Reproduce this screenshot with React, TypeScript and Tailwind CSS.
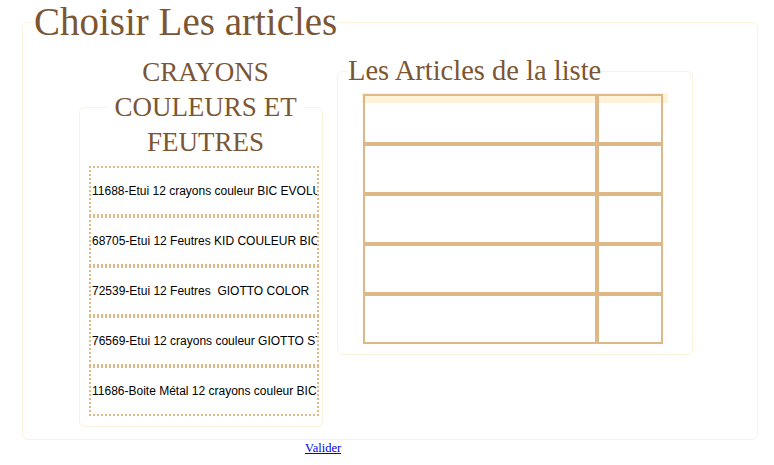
const articles = [
  "11688-Etui 12 crayons couleur BIC EVOLUTION",
  "68705-Etui 12 Feutres KID COULEUR BIC",
  "72539-Etui 12 Feutres  GIOTTO COLOR",
  "76569-Etui 12 crayons couleur GIOTTO STILNOVO",
  "11686-Boite Métal 12 crayons couleur BIC",
];

const serif = "font-['Liberation_Serif','Times_New_Roman',serif]";

const ArticleItem = ({ label }: { label: string }) => (
  <div className="flex h-[50px] w-[230px] items-center overflow-hidden border-2 border-dotted border-[#deb887] pl-px">
    <span className="font-['Liberation_Sans',Arial,sans-serif] text-[12px] whitespace-pre text-black">
      {label}
    </span>
  </div>
);

const ListTable = () => (
  <div className="relative ml-[15px] mt-[7px] w-[300px]">
    <div className="absolute -top-px -left-px h-[10px] w-[306px] bg-[#fef2d8]" />
    <table className="relative table-fixed border-separate border-spacing-0">
      <tbody>
        {[0, 1, 2, 3, 4].map((row) => (
          <tr key={row}>
            <td className="h-[50px] w-[234px] border-2 border-[#deb887]" />
            <td className="h-[50px] w-[66px] border-2 border-[#deb887]" />
          </tr>
        ))}
      </tbody>
    </table>
  </div>
);

export default function App() {
  return (
    <div className="min-h-[465px] w-[774px] bg-white">
      <fieldset className="ml-[22px] h-[440px] w-[736px] rounded-md border border-[#fcf2dc] pl-[11px]">
        <legend
          className={`${serif} text-[39px] leading-[44px] text-[#7b5634]`}
        >
          Choisir Les articles
        </legend>

        <div className="mt-[11px] ml-[45px] flex flex-row items-start gap-x-[14px]">
          <fieldset className="w-[244px] rounded-md border border-[#fcf2dc] pt-[6px] pb-[10px] pl-[9px]">
            <legend
              className={`${serif} mx-auto w-[196px] text-center text-[27px] leading-[35px] text-[#7b5634]`}
            >
              CRAYONS COULEURS ET FEUTRES
            </legend>
            <div className="flex flex-col">
              {articles.map((a) => (
                <ArticleItem key={a} label={a} />
              ))}
            </div>
          </fieldset>

          <fieldset className="w-[356px] rounded-md border border-[#fcf2dc] pb-[10px] pl-[10px]">
            <legend
              className={`${serif} text-[28.5px] leading-[32px] text-[#7b5634]`}
            >
              Les Articles de la liste
            </legend>
            <ListTable />
          </fieldset>
        </div>
      </fieldset>

      <div className={`${serif} pl-[305px] text-[12.5px] leading-[16px]`}>
        <a href="#" className="text-[#0000ee] underline">
          Valider
        </a>
      </div>
    </div>
  );
}
